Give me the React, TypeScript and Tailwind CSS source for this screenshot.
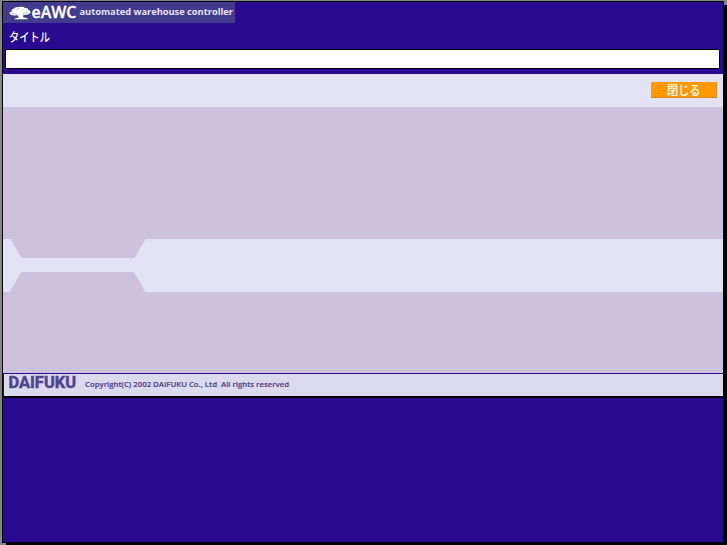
function TreeMark() {
  return (
    <svg className="ml-1.5 h-[16px] w-[22px] shrink-0" viewBox="0 0 22 16" fill="#fff">
      <path d="M0.5 8.6Q0 6.8 3 6.4Q1.8 4.8 4.5 3.8Q6 1.6 10 2Q14.5 1 16 3Q19.5 2.8 19.5 5Q22.5 6 21 8.3Q19 10.3 14.5 9.8L14 12.2L18.5 13.2V14.3H5.5V13.4L10 12.4L8.5 10.2Q2 11.4 0.5 8.6Z" />
      <path d="M2.5 8.4L8 9.3M14 8.6L19 7.5M7.5 4.4L10.5 3.8" fill="none" stroke="#aaa5d2" strokeWidth=".7" />
    </svg>
  );
}

function Brand() {
  return (
    <header className="flex h-[21px] w-[232px] shrink-0 items-start bg-[#433c8e]">
      <div className="flex pt-[3px]">
        <TreeMark />
      </div>
      <svg className="h-[21px] w-[204px] shrink-0 overflow-visible font-['Open_Sans',sans-serif]" viewBox="31 2 204 21" fill="#fff">
        <text x="31.5" y="18" fontSize="16.5" fontWeight="600" stroke="#fff" strokeWidth=".3" textLength="45" lengthAdjust="spacingAndGlyphs">eAWC</text>
        <text x="79.5" y="15" fontSize="9.3" fontWeight="700" fill="#e6e3f5" textLength="153.5" lengthAdjust="spacing">automated warehouse controller</text>
      </svg>
    </header>
  );
}

function Footer() {
  return (
    <footer className="shrink-0 border-b-2 border-black">
      <div className="border-l border-t border-[#29098e]">
        <svg className="block h-[22px] w-full overflow-visible bg-[#dad9ed]" viewBox="4 374 719 22" fill="#50448c">
          <text x="8.5" y="388.3" fontSize="16.5" fontWeight="700" stroke="#50448c" strokeWidth=".5" textLength="67.5" lengthAdjust="spacingAndGlyphs" className="font-[Roboto,sans-serif]">DAIFUKU</text>
          <text x="85" y="387" fontSize="7.6" fontWeight="600" textLength="204" lengthAdjust="spacingAndGlyphs" stroke="#50448c" strokeWidth=".15" className="font-['Open_Sans',sans-serif]">Copyright(C) 2002 DAIFUKU Co., Ltd&nbsp; All rights reserved</text>
        </svg>
      </div>
    </footer>
  );
}

export default function App() {
  return (
    <div className="h-[545px] w-[727px] overflow-hidden bg-[#858585] pl-[2px] pt-px">
      <main className="flex h-[542px] w-[722px] flex-col border border-black bg-[#2a0a90] shadow-[4px_4px_0_0_#000]">
        <Brand />
        <h1 className="h-[26px] shrink-0 pl-[6px]">
          <svg className="block h-[26px] w-[60px] overflow-visible" viewBox="0 0 60 26" fill="#fff">
            <text x="0" y="19" fontSize="12" fontWeight="500" textLength="41" lengthAdjust="spacingAndGlyphs" className="font-['Noto_Sans_CJK_JP',sans-serif]">タイトル</text>
          </svg>
        </h1>
        <div className="ml-[2px] h-[20px] w-[715px] shrink-0 border border-black bg-white" />
        <div className="mt-[5px] flex h-[33px] shrink-0 items-start justify-end bg-[#e3e2f4] pr-[6px] pt-[8px]">
          <button className="h-[16px] w-[66px] border-b border-r border-[#d98a25] bg-[#ff9900]">
            <svg className="block h-[15px] w-[65px] overflow-visible" viewBox="0 0 65 15" fill="#fff">
              <text x="16" y="12.5" fontSize="12" fontWeight="500" textLength="33.5" lengthAdjust="spacingAndGlyphs" className="font-['Noto_Sans_CJK_JP',sans-serif]">閉じる</text>
            </svg>
          </button>
        </div>
        <div className="h-[132px] shrink-0 bg-[#ccc2dc]" />
        <div className="h-[53px] shrink-0 bg-[#e3e2f4]">
          <svg className="block h-[53px] w-[150px]" viewBox="0 0 150 53" fill="#ccc2dc">
            <path d="M7.5 0H142.5L131.5 19H18.5ZM18.5 33H131L142.5 53H6.5Z" />
          </svg>
        </div>
        <div className="h-[81px] shrink-0 bg-[#ccc2dc]" />
        <Footer />
      </main>
    </div>
  );
}
